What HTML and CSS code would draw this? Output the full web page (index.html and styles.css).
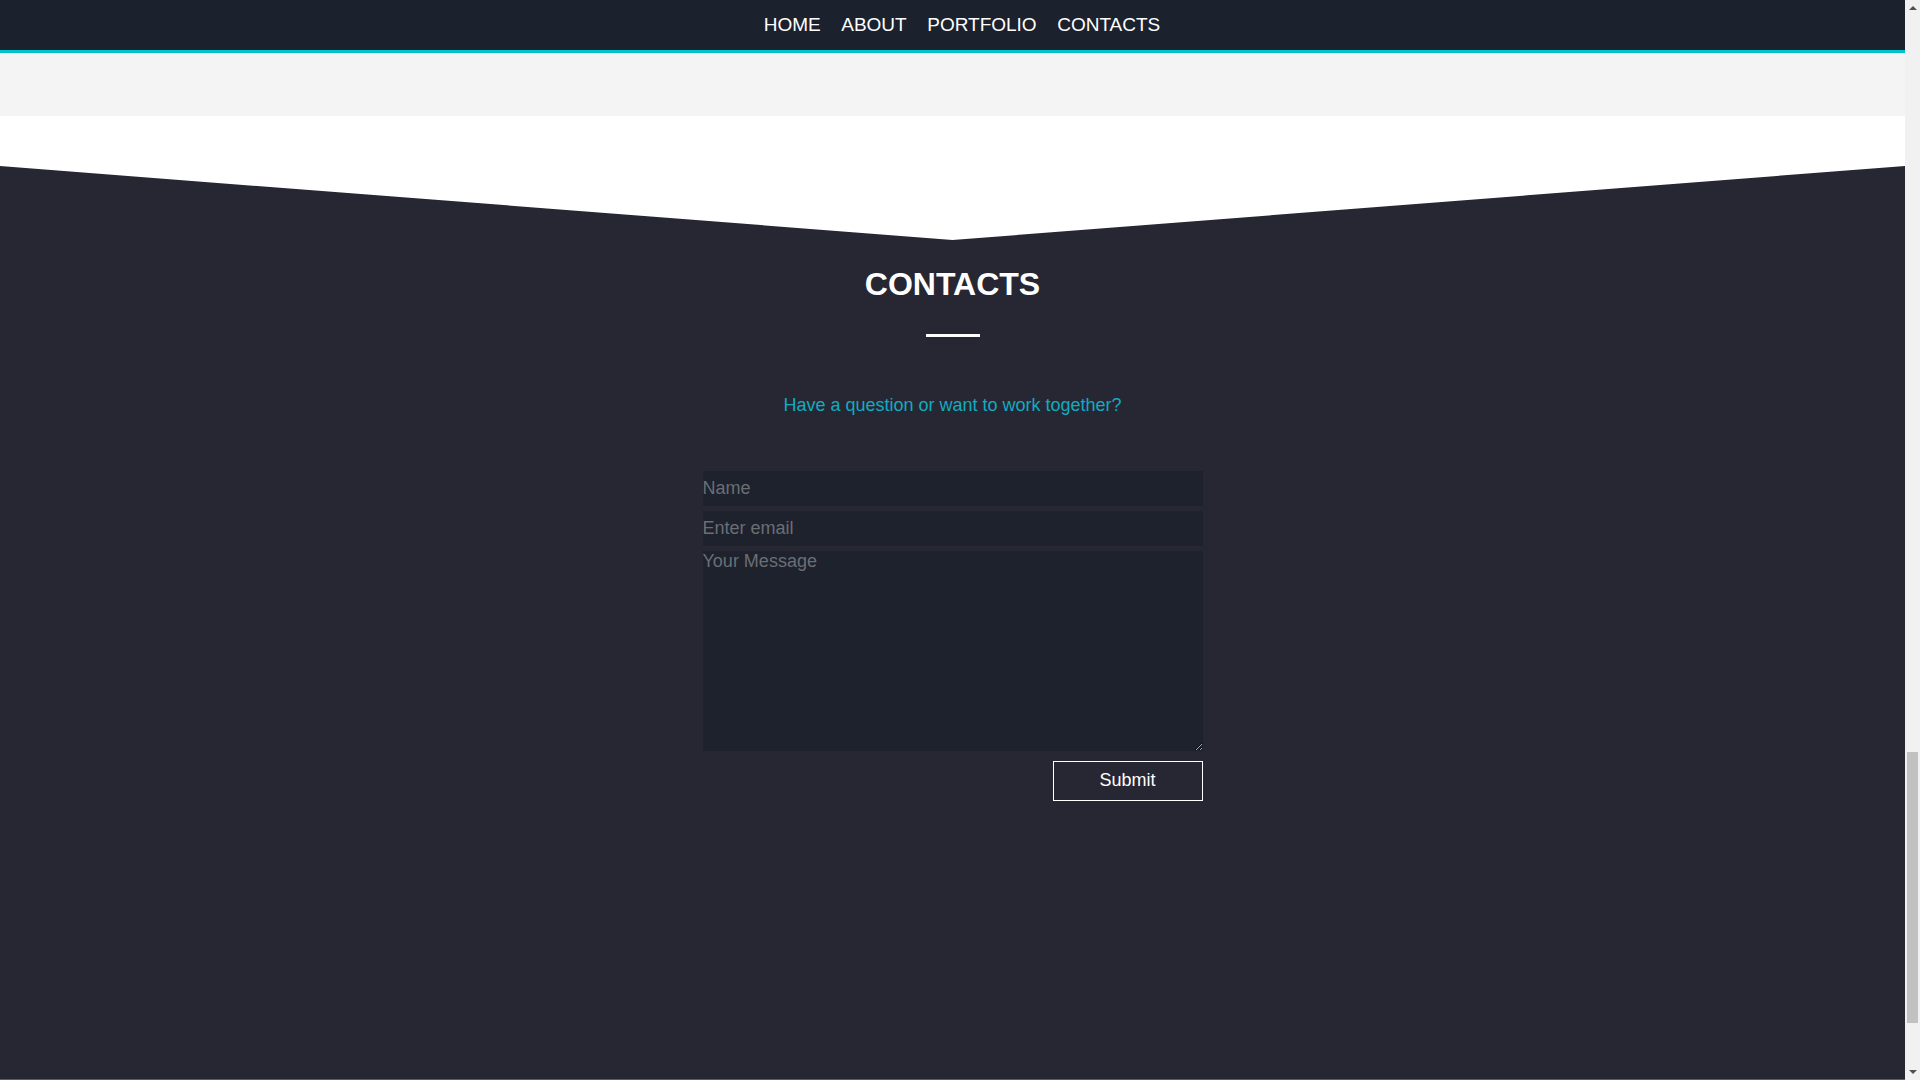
FILE: index.html
```html
<!DOCTYPE html>
<html lang="en">
<head>
<meta charset="utf-8">
<title>Contacts</title>
<link rel="stylesheet" href="styles.css">
</head>
<body>
<nav class="topbar">
  <a class="nav-link" href="#home">HOME</a>
  <a class="nav-link" href="#about">ABOUT</a>
  <a class="nav-link" href="#portfolio">PORTFOLIO</a>
  <a class="nav-link" href="#contacts">CONTACTS</a>
</nav>
<div class="portfolio-end"></div>
<section class="contacts" id="contacts">
  <h2 class="contacts-title">CONTACTS</h2>
  <div class="title-rule"></div>
  <p class="contacts-lead">Have a question or want to work together?</p>
  <form class="contact-form">
    <input class="field" type="text" placeholder="Name">
    <input class="field" type="email" placeholder="Enter email">
    <textarea class="field field-message" placeholder="Your Message"></textarea>
    <button class="submit-btn" type="button">Submit</button>
  </form>
</section>
<div class="scrollbar" aria-hidden="true">
  <span class="sb-arrow sb-up"></span>
  <span class="sb-track"><span class="sb-thumb"></span></span>
  <span class="sb-arrow sb-down"></span>
</div>
</body>
</html>
```
FILE: styles.css
```css
html {
  background: #f1f1f1;
}
body {
  margin: 0 15px 0 0;
  background: #ffffff;
  font-family: "Liberation Sans", Arial, sans-serif;
}
.topbar {
  position: fixed;
  top: 0;
  left: 0;
  right: 15px;
  height: 49px;
  background: #1c212e;
  border-bottom: 3px solid #00c4cc;
  display: flex;
  justify-content: center;
  align-items: center;
  gap: 20.5px;
  padding-left: 19px;
  padding-bottom: 1px;
  box-sizing: content-box;
  z-index: 10;
}
.nav-link {
  color: #ffffff;
  text-decoration: none;
  font-size: 19px;
}
.portfolio-end {
  height: 116px;
  background: #f4f4f4;
}
.contacts {
  margin-top: 50px;
  background: #262733;
  clip-path: polygon(0 0, 50% 74px, 100% 0, 100% 100%, 0 100%);
  padding: 100px 0 279px;
  display: flex;
  flex-direction: column;
  align-items: center;
}
.contacts-title {
  margin: 0;
  color: #ffffff;
  font-size: 32px;
  font-weight: bold;
  line-height: 36px;
}
.title-rule {
  width: 54px;
  height: 3px;
  background: #ffffff;
  margin-top: 32px;
}
.contacts-lead {
  margin: 58px 0 0;
  color: #12abc0;
  font-size: 18px;
  line-height: 1.149;
}
.contact-form {
  width: 500px;
  margin-top: 55px;
  display: flex;
  flex-direction: column;
}
.field {
  display: block;
  box-sizing: border-box;
  width: 100%;
  height: 35px;
  margin: 0 0 5px;
  padding: 0;
  border: none;
  outline: none;
  background: #1e222d;
  color: #dddddd;
  font-family: "Liberation Sans", Arial, sans-serif;
  font-size: 18px;
}
.field::placeholder {
  color: #6b6e74;
}
.field-message {
  height: 200px;
  margin-bottom: 0;
  resize: vertical;
}
.submit-btn {
  align-self: flex-end;
  margin-top: 10px;
  width: 150px;
  height: 40px;
  background: transparent;
  border: 1px solid #ffffff;
  color: #ffffff;
  font-family: "Liberation Sans", Arial, sans-serif;
  font-size: 18px;
  cursor: pointer;
}
.scrollbar {
  position: fixed;
  top: 0;
  right: 0;
  bottom: 0;
  width: 15px;
  background: #f1f1f1;
  display: flex;
  flex-direction: column;
  z-index: 20;
}
.sb-arrow {
  height: 17px;
  display: flex;
  justify-content: center;
  align-items: center;
}
.sb-up::before,
.sb-down::before {
  content: "";
  width: 0;
  height: 0;
  border-left: 4px solid transparent;
  border-right: 4px solid transparent;
}
.sb-up::before {
  border-bottom: 4px solid #505050;
  margin-bottom: 1px;
}
.sb-down::before {
  border-top: 4px solid #505050;
  margin-top: 1px;
}
.sb-track {
  flex: 1;
  display: flex;
  flex-direction: column;
  padding: 735px 2px 0;
}
.sb-thumb {
  height: 271px;
  background: #c1c1c1;
}
```
